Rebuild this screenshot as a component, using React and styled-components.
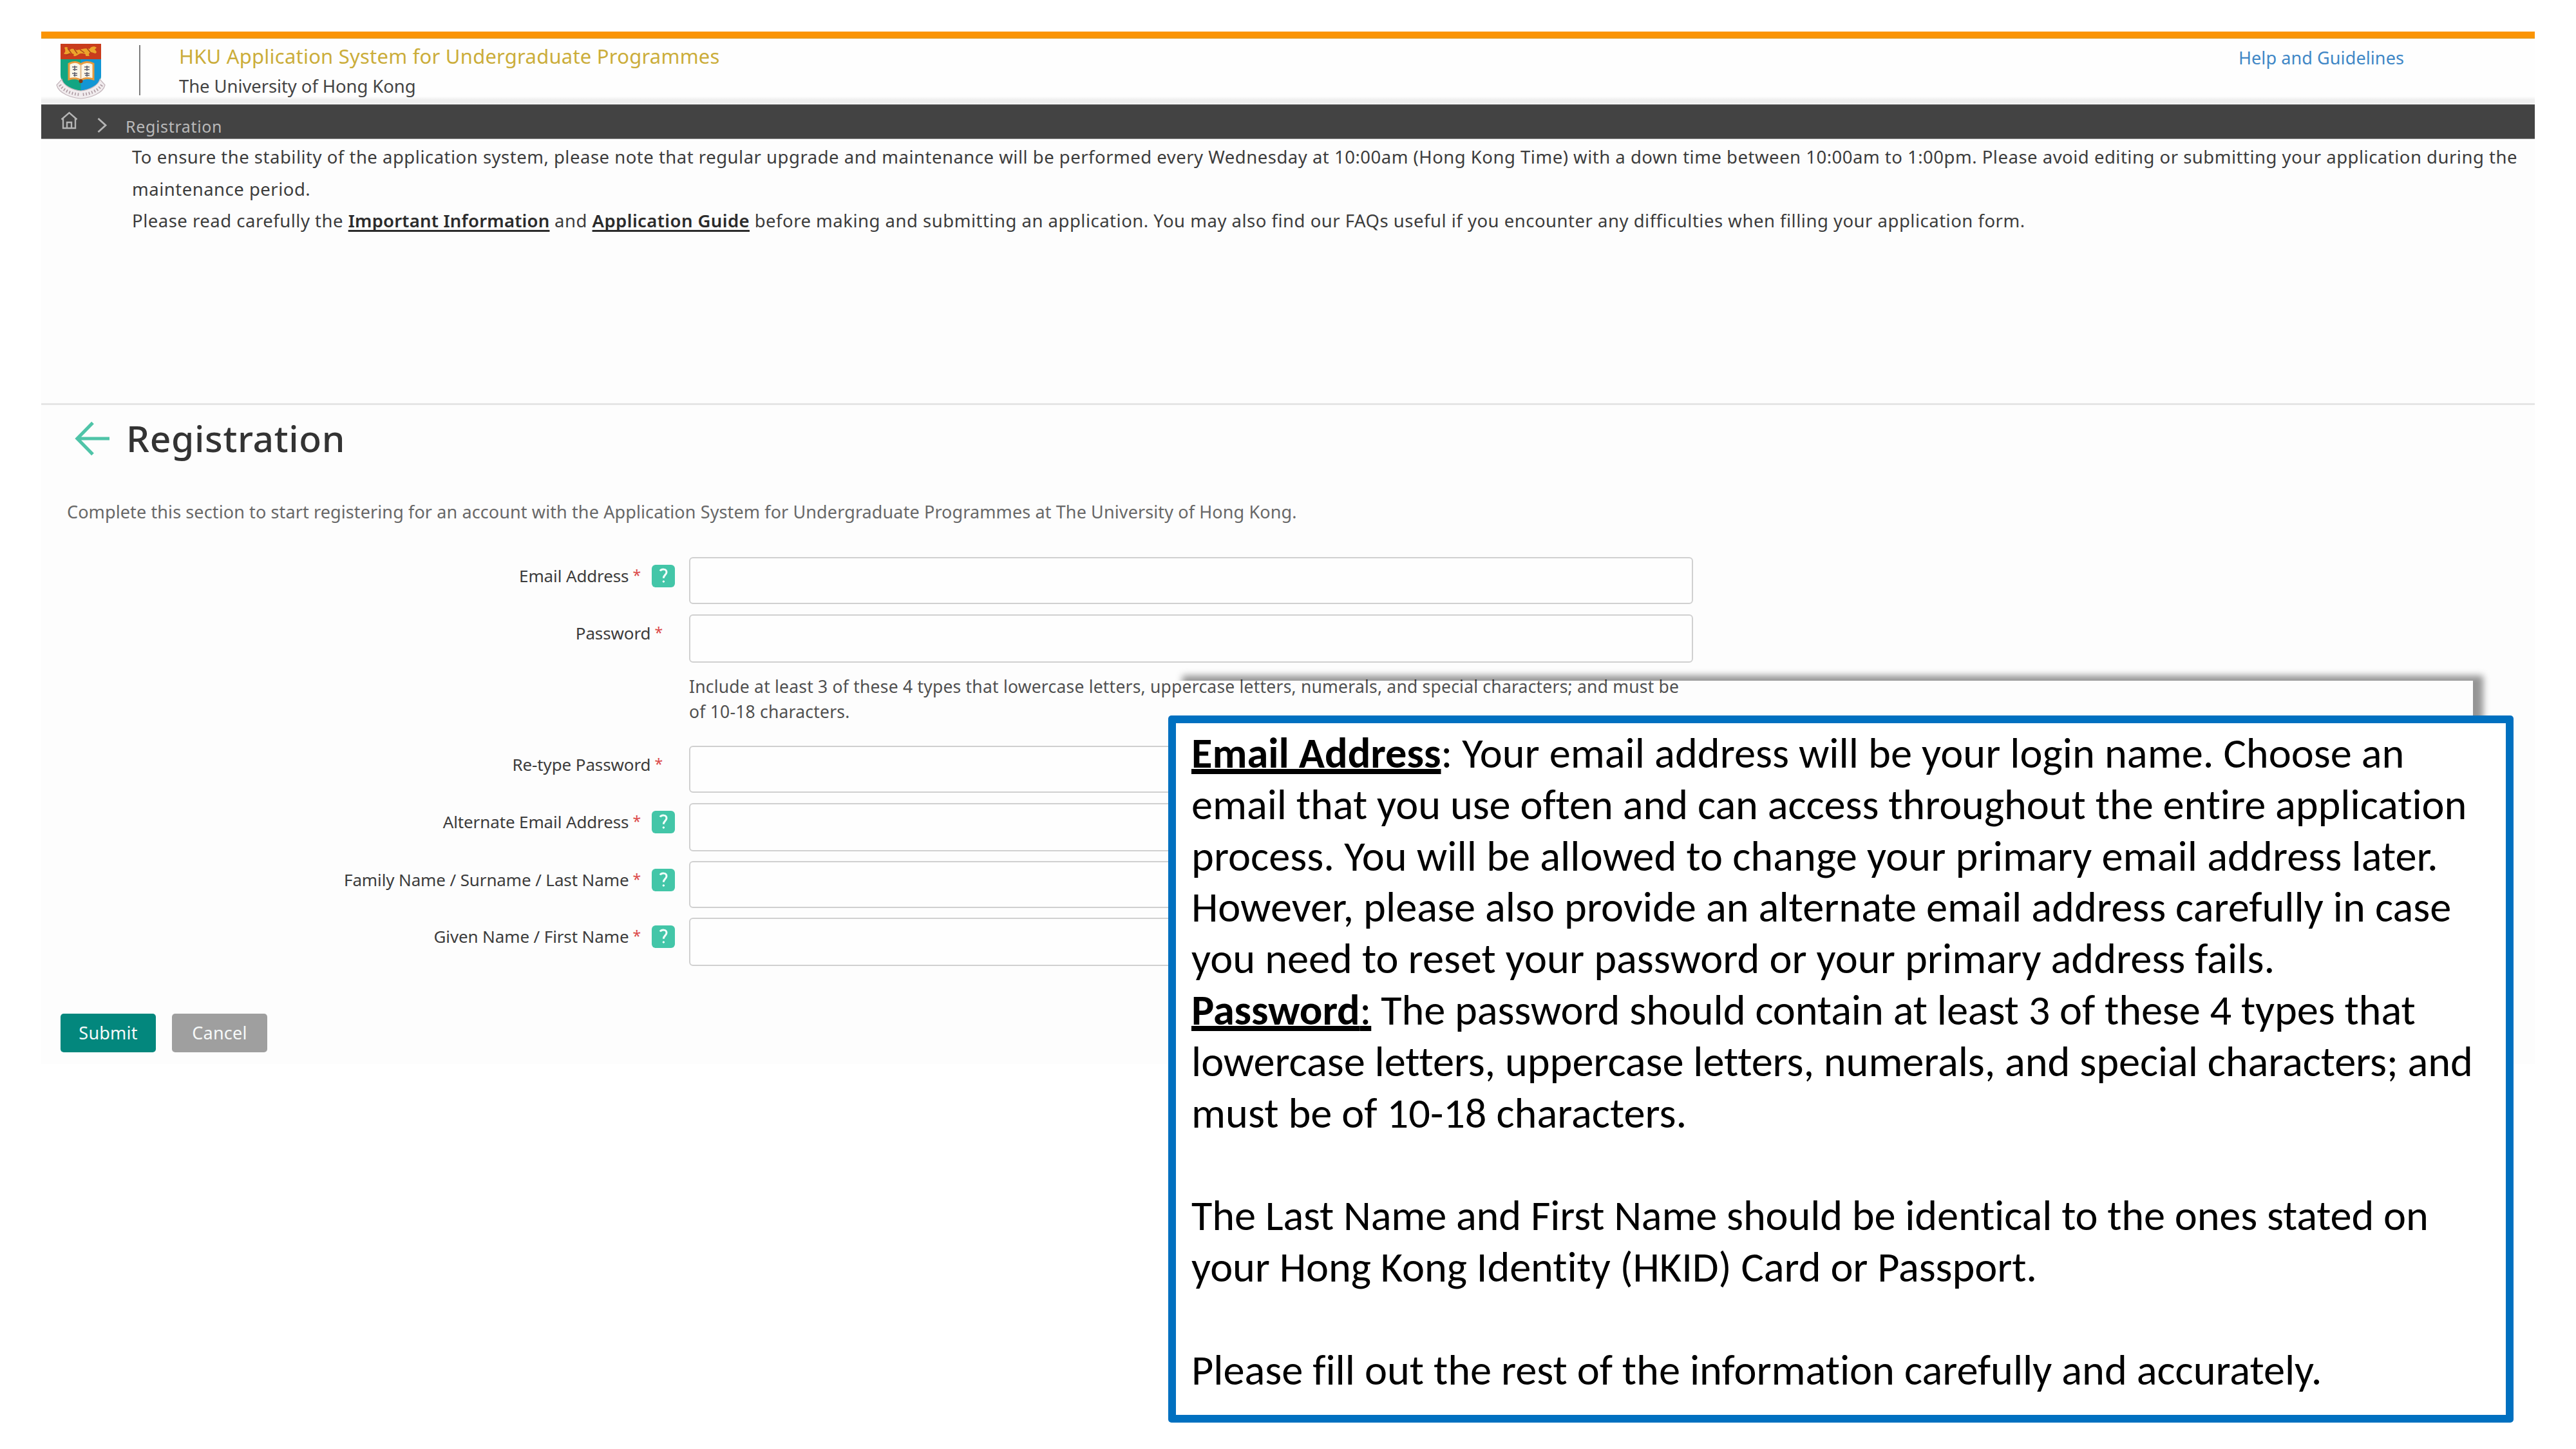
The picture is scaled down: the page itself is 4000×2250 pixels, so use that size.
import React from 'react';
import styled, { createGlobalStyle } from 'styled-components';

const GlobalStyle = createGlobalStyle`
  *, *::before, *::after { box-sizing: border-box; }
  html, body { margin: 0; padding: 0; background: #ffffff; }
  body { font-family: "Noto Sans", "Open Sans", sans-serif; color: #3c3c3c; }
  h1, p { margin: 0; font-weight: 400; }
`;

const Slide = styled.main`
  position: relative;
  width: 4000px;
  height: 2250px;
  padding: 49px 64px 0;
  overflow: hidden;
  background: #ffffff;
`;

const Screen = styled.div`
  display: flex;
  flex-direction: column;
  height: 1603px;
  background: #fdfdfd;
`;

const TopRule = styled.div`
  flex: none;
  height: 11px;
  background: linear-gradient(#fb9404 0 75%, #e39c22);
`;

const Header = styled.header`
  flex: none;
  display: flex;
  align-items: flex-start;
  height: 102px;
  padding: 0 203px 0 23px;
  background: linear-gradient(#fefefe 0 88%, #efefef 93% 98%, #ffffff);
`;

const Crest = styled.svg`
  flex: none;
  width: 78px;
  height: 88px;
  margin-top: 6px;
`;

const HeaderDivider = styled.div`
  width: 2px;
  height: 78px;
  margin: 10px 60px 0 51px;
  background: #7c7c7c;
`;

const Brand = styled.div`
  flex: 1;
  padding-top: 4px;
`;

const BrandTitle = styled.p`
  font-size: 31px;
  line-height: 46px;
  letter-spacing: 0.22px;
  color: #cbad3a;
`;

const BrandSub = styled.p`
  margin-top: 4px;
  font-size: 27.5px;
  line-height: 40px;
  letter-spacing: -0.1px;
  color: #444444;
`;

const HelpLink = styled.a`
  margin-top: 10px;
  font-size: 27px;
  line-height: 40px;
  letter-spacing: 0.1px;
  color: #3f87c6;
`;

const Crumbs = styled.nav`
  flex: none;
  display: flex;
  align-items: flex-start;
  height: 54px;
  padding-left: 30px;
  border-top: 1px solid #6a6a6a;
  border-bottom: 1px solid #8a8a8a;
  background: #434343;
`;

const HomeIcon = styled.svg`
  width: 27px;
  height: 28px;
  margin-top: 10px;
`;

const ChevronIcon = styled.svg`
  width: 18px;
  height: 26px;
  margin: 19px 0 0 29px;
`;

const CrumbText = styled.span`
  margin: 13px 0 0 27px;
  font-size: 25px;
  line-height: 40px;
  letter-spacing: 0.65px;
  color: #b9b9b9;
`;

const Notice = styled.section`
  flex: none;
  height: 413px;
  padding: 3px 0 0 141px;
  border-bottom: 3px solid #e5e5e5;
  font-size: 27.5px;
  line-height: 49.5px;
  letter-spacing: 0.5px;
  white-space: nowrap;
`;

const NoticeLine = styled.p``;

const NoticeLink = styled.a`
  font-weight: 600;
  letter-spacing: ${({ $spacing }) => $spacing}px;
  color: #2b2b2b;
  text-decoration: underline;
  text-decoration-thickness: 3px;
  text-underline-offset: 4px;
  text-decoration-skip-ink: none;
`;

const TitleBar = styled.div`
  display: flex;
  align-items: flex-start;
  padding: 16px 0 0 51px;
`;

const BackIcon = styled.svg`
  width: 56px;
  height: 54px;
  margin-top: 9px;
`;

const Title = styled.h1`
  margin-left: 25px;
  font-size: 57px;
  font-weight: 500;
  line-height: 70px;
  letter-spacing: 0.65px;
  color: #333333;
`;

const Intro = styled.p`
  margin: 60px 0 0 40px;
  font-size: 27px;
  line-height: 40px;
  letter-spacing: 0.11px;
  color: #686868;
`;

const Form = styled.form`
  display: flex;
  flex-direction: column;
  margin-top: 50px;
`;

const Row = styled.div`
  display: flex;
  align-items: flex-start;
  height: ${({ $height }) => $height}px;
  margin-bottom: ${({ $gap }) => $gap}px;
`;

const Label = styled.label`
  display: flex;
  justify-content: flex-end;
  align-items: flex-start;
  width: 1006px;
  padding: 9px ${({ $help }) => ($help ? 22 : 41)}px 0 0;
  font-size: 26px;
  line-height: 40px;
  letter-spacing: -0.12px;
  white-space: nowrap;
`;

const Required = styled.span`
  margin-left: 6px;
  font-size: 23px;
  line-height: 38px;
  color: #dc4b4b;
`;

const HelpBadge = styled.span`
  display: flex;
  align-items: center;
  justify-content: center;
  width: 36px;
  height: 35px;
  margin: 2.5px 0 0 17px;
  border-radius: 6px;
  background: #43c6a8;
`;

const HelpGlyph = styled.svg`
  width: 18px;
  height: 26px;
`;

const Input = styled.input`
  width: 1559px;
  height: 100%;
  margin: 0;
  padding: 0 16px;
  border: 2.5px solid #d0d0d0;
  border-radius: 6px;
  background: #fefefe;
  font: inherit;
  outline: none;
`;

const Hint = styled.p`
  margin: 0 0 33px 1006px;
  padding-top: 1px;
  font-size: 26.5px;
  line-height: 39px;
  letter-spacing: 0.21px;
  color: #505050;
  white-space: nowrap;
`;

const Actions = styled.div`
  display: flex;
  gap: 25px;
  margin: 74px 0 0 30px;
`;

const Button = styled.button`
  width: 148px;
  height: 60px;
  padding: 0;
  border: 0;
  border-radius: 5px;
  background: ${({ $primary }) => ($primary ? '#03877d' : '#9f9f9f')};
  color: #f6f9f9;
  font: 27px/60px "Noto Sans", "Open Sans", sans-serif;
  letter-spacing: 0.2px;
`;

const PanelShadow = styled.div`
  position: absolute;
  left: 1820px;
  top: 1057px;
  width: 2020px;
  height: 1100px;
  box-shadow: 16px -8px 10px rgba(0, 0, 0, 0.41);
`;

const Callout = styled.aside`
  position: absolute;
  left: 1814px;
  top: 1111px;
  width: 2089px;
  height: 1098px;
  border-radius: 5px;
  background: #0070c0;
  padding: 12px;
`;

const CalloutBody = styled.div`
  height: 100%;
  padding: 7px 0 0 24px;
  background: #ffffff;
  color: #000000;
  font-family: Carlito, Calibri, Lato, sans-serif;
  font-size: 66.4px;
  line-height: 79.83px;
  font-variant-ligatures: none;
  white-space: nowrap;
`;

const CalloutLine = styled.p`
  height: 79.83px;
  letter-spacing: ${({ $spacing = 0 }) => $spacing}px;
`;

const Term = styled.span`
  font-weight: ${({ $bold }) => ($bold ? 700 : 400)};
  text-decoration: underline;
  text-decoration-thickness: 8px;
  text-underline-offset: 2px;
  text-decoration-skip-ink: none;
`;

const fieldsTop = [
  { label: 'Email Address', help: true, height: 73, gap: 16 },
  { label: 'Password', help: false, height: 75, gap: 17 },
];

const fieldsBottom = [
  { label: 'Re-type Password', help: false, height: 73, gap: 16 },
  { label: 'Alternate Email Address', help: true, height: 75, gap: 15 },
  { label: 'Family Name / Surname / Last Name', help: true, height: 73, gap: 15 },
  { label: 'Given Name / First Name', help: true, height: 75, gap: 0 },
];

function Field({ label, help, height, gap }) {
  return (
    <Row $height={height} $gap={gap}>
      <Label $help={help}>
        {label}
        <Required>*</Required>
        {help && (
          <HelpBadge>
            <HelpGlyph viewBox="0 0 18 26" fill="none" stroke="#f2fffb" strokeWidth="3">
              <path d="M4 5.5C6 2.5 14 1.5 14 7.5c0 4-4.6 4.4-4.6 9.2" />
              <circle cx="9.4" cy="22" r="1.3" fill="#f2fffb" strokeWidth="1" />
            </HelpGlyph>
          </HelpBadge>
        )}
      </Label>
      <Input aria-label={label} />
    </Row>
  );
}

function CrestMark() {
  return (
    <Crest viewBox="0 0 78 88">
      <path d="M7 2H70V50C70 66 54 76 38.500 82C23 76 7 66 7 50Z" fill="#12a582" />
      <path d="M38.500 26H70V50C70 66 54 76 38.500 82Z" fill="#1296d4" />
      <path d="M7 2H70V26H7Z" fill="#c93c1c" />
      <path
        d="M13 8c4-3 6 1 8 4 3-4 8-2 11 0 8-2 15-4 20-2 2-4 8-5 11-2l-3 3c3 2 4 5 1 6l-6-2c-4 1-5 3-3 6h-6c1-4-3-4-8-4-4 1-6 5-11 4 2-3 0-4-4-4-5 1-9 2-11 0 3-2 3-5 1-9Z"
        fill="#eda42c"
      />
      <path d="M18 9l6 8m4-7 5 7m4-6 7 5m4-7 6 7m-38 4 6-3" stroke="#a84118" strokeWidth="1.500" fill="none" />
      <path d="M20 33c7-4 14-3 18.500 1C43 30 51 29 58 33V57c-7-2-15-2-19.500 2C34 55 27 55 20 57Z" fill="#fbf6e8" stroke="#e89a3c" strokeWidth="3" />
      <path d="M38.500 34V58" stroke="#dfb889" strokeWidth="2" />
      <path
        d="M25 38h8M26 42h7M29 36v8M25 48h8M27 51h6M29 46v7M44 38h8M44 42h8M48 36v8M44 48h8M45 51h7M48 46v7"
        stroke="#60606c"
        strokeWidth="1.600"
        fill="none"
      />
      <circle cx="38.500" cy="60" r="3" fill="#7b3a16" />
      <path
        d="M1 66 9 57C11 67 26 74 38.500 75 51 74 66 67 68 57L76 66C73 79 53 86 38.500 87 24 86 4 79 1 66Z"
        fill="#f1ecee"
        stroke="#c4b6bc"
        strokeWidth="1.200"
      />
      <path
        d="M6 66c6 9 18 14 32 15M71 66c-6 9-18 14-32 15"
        fill="none"
        stroke="#ad9aa2"
        strokeWidth="4.500"
        strokeDasharray="1.600 3"
      />
    </Crest>
  );
}

export default function App() {
  return (
    <>
      <GlobalStyle />
      <Slide>
        <Screen>
          <TopRule />
          <Header>
            <CrestMark />
            <HeaderDivider />
            <Brand>
              <BrandTitle>HKU Application System for Undergraduate Programmes</BrandTitle>
              <BrandSub>The University of Hong Kong</BrandSub>
            </Brand>
            <HelpLink>Help and Guidelines</HelpLink>
          </Header>
          <Crumbs>
            <HomeIcon viewBox="0 0 27 28" fill="none" stroke="#b5b5b5" strokeWidth="2.400">
              <path d="M1.500 12.500 13.500 2 25.500 12.500M4 11V26H23V11M10 26V17H17V26" />
            </HomeIcon>
            <ChevronIcon viewBox="0 0 18 26" fill="none" stroke="#b5b5b5" strokeWidth="2.800">
              <path d="M2.500 2 14 12.500 2.500 23" />
            </ChevronIcon>
            <CrumbText>Registration</CrumbText>
          </Crumbs>
          <Notice>
            <NoticeLine>
              To ensure the stability of the application system, please note that regular upgrade and maintenance will be
              performed every Wednesday at 10:00am (Hong Kong Time) with a down time between 10:00am to 1:00pm. Please
              avoid editing or submitting your application during the
            </NoticeLine>
            <NoticeLine>maintenance period.</NoticeLine>
            <NoticeLine>
              Please read carefully the <NoticeLink $spacing={0.2}>Important Information</NoticeLink> and{' '}
              <NoticeLink $spacing={0.4}>Application Guide</NoticeLink> before making and submitting an application. You
              may also find our FAQs useful if you encounter any difficulties when filling your application form.
            </NoticeLine>
          </Notice>
          <TitleBar>
            <BackIcon viewBox="0 0 56 54" fill="none" stroke="#4fc4a8" strokeWidth="5.200">
              <path d="M29 2.500 5 27 29 51.500M5 27H55" />
            </BackIcon>
            <Title>Registration</Title>
          </TitleBar>
          <Intro>
            Complete this section to start registering for an account with the Application System for Undergraduate
            Programmes at The University of Hong Kong.
          </Intro>
          <Form>
            {fieldsTop.map((field) => (
              <Field key={field.label} {...field} />
            ))}
            <Hint>
              Include at least 3 of these 4 types that lowercase letters, uppercase letters, numerals, and special
              characters; and must be
              <br />
              of 10-18 characters.
            </Hint>
            {fieldsBottom.map((field) => (
              <Field key={field.label} {...field} />
            ))}
            <Actions>
              <Button type="button" $primary>
                Submit
              </Button>
              <Button type="button">Cancel</Button>
            </Actions>
          </Form>
        </Screen>
        <PanelShadow />
        <Callout>
          <CalloutBody>
            <CalloutLine>
              <Term $bold>Email Address</Term>: Your email address will be your login name. Choose an
            </CalloutLine>
            <CalloutLine $spacing={-0.08}>
              email that you use often and can access throughout the entire application
            </CalloutLine>
            <CalloutLine $spacing={0.05}>
              process. You will be allowed to change your primary email address later.
            </CalloutLine>
            <CalloutLine>However, please also provide an alternate email address carefully in case</CalloutLine>
            <CalloutLine>you need to reset your password or your primary address fails.</CalloutLine>
            <CalloutLine $spacing={-0.11}>
              <Term $bold>Password</Term>
              <Term>:</Term> The password should contain at least 3 of these 4 types that
            </CalloutLine>
            <CalloutLine $spacing={-0.09}>
              lowercase letters, uppercase letters, numerals, and special characters; and
            </CalloutLine>
            <CalloutLine>must be of 10-18 characters.</CalloutLine>
            <CalloutLine />
            <CalloutLine $spacing={-0.16}>
              The Last Name and First Name should be identical to the ones stated on
            </CalloutLine>
            <CalloutLine $spacing={-0.1}>your Hong Kong Identity (HKID) Card or Passport.</CalloutLine>
            <CalloutLine />
            <CalloutLine $spacing={-0.03}>
              Please fill out the rest of the information carefully and accurately.
            </CalloutLine>
          </CalloutBody>
        </Callout>
      </Slide>
    </>
  );
}
